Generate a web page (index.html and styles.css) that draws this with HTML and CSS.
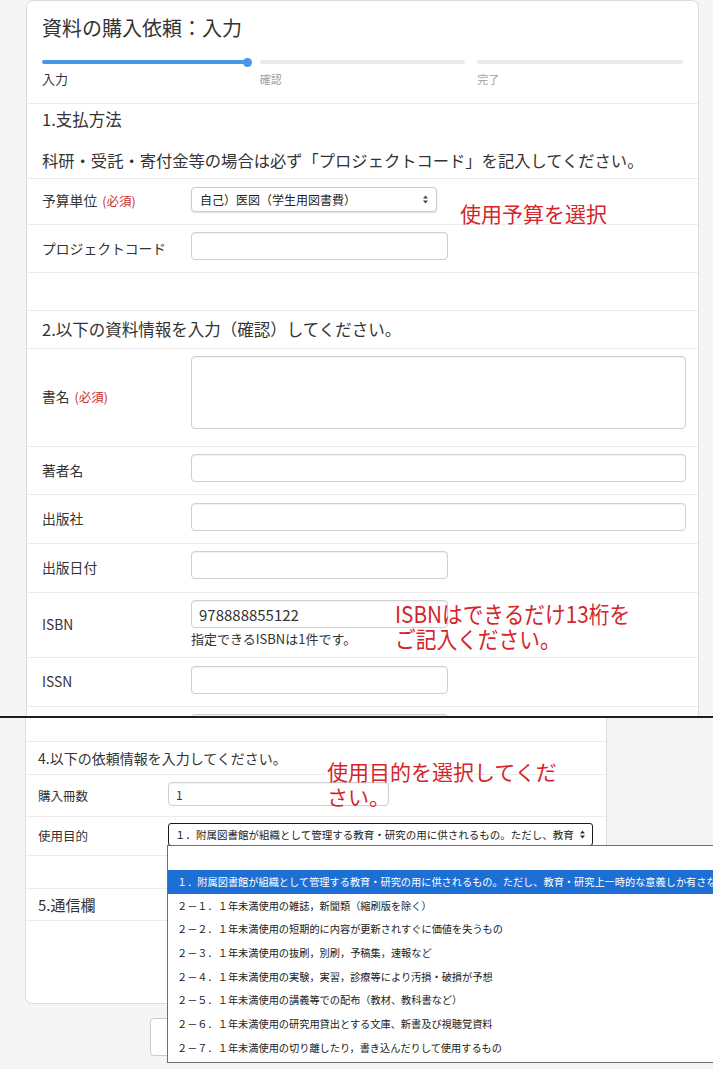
FILE: index.html
```html
<!DOCTYPE html>
<html lang="ja">
<head>
<meta charset="utf-8">
<title>資料の購入依頼：入力</title>
<link rel="stylesheet" href="styles.css">
</head>
<body>
<div class="shot shot-a">
  <div class="card card-a">
    <div class="head">
      <h1 class="title">資料の購入依頼：入力</h1>
      <div class="steps">
        <div class="step done"><div class="bar"><span class="dot"></span></div><span class="step-label">入力</span></div>
        <div class="step"><div class="bar"></div><span class="step-label">確認</span></div>
        <div class="step"><div class="bar"></div><span class="step-label">完了</span></div>
      </div>
    </div>
    <div class="sec sec-1">
      <h2 class="sec-title">1.支払方法</h2>
      <p class="sec-note">科研・受託・寄付金等の場合は必ず「プロジェクトコード」を記入してください。</p>
    </div>
    <div class="row h46">
      <label class="lbl">予算単位<span class="req">(必須)</span></label>
      <div class="ctl ctl-8">
        <div class="sel sel-a"><span>自己）医図（学生用図書費）</span>
          <svg class="arr" width="7" height="11" viewBox="0 0 7 11"><path d="M3.5 1.5 L6 4.5 H1 Z M3.5 9.5 L6 6.5 H1 Z" fill="#444"/></svg>
        </div>
      </div>
    </div>
    <div class="row h48">
      <label class="lbl">プロジェクトコード</label>
      <div class="ctl"><input class="inp w-s" type="text"></div>
    </div>
    <div class="row h38 blank"></div>
    <div class="row-sec h38">2.以下の資料情報を入力（確認）してください。</div>
    <div class="row h98">
      <label class="lbl">書名<span class="req">(必須)</span></label>
      <div class="ctl"><textarea class="inp area w-l"></textarea></div>
    </div>
    <div class="row h48">
      <label class="lbl">著者名</label>
      <div class="ctl"><input class="inp w-l" type="text"></div>
    </div>
    <div class="row h49">
      <label class="lbl">出版社</label>
      <div class="ctl ctl-8"><input class="inp w-l" type="text"></div>
    </div>
    <div class="row h49">
      <label class="lbl">出版日付</label>
      <div class="ctl"><input class="inp w-s" type="text"></div>
    </div>
    <div class="row h65">
      <label class="lbl">ISBN</label>
      <div class="ctl">
        <input class="inp w-s val" type="text" value="978888855122">
        <p class="help">指定できるISBNは1件です。</p>
      </div>
    </div>
    <div class="row h49">
      <label class="lbl">ISSN</label>
      <div class="ctl ctl-8"><input class="inp w-s" type="text"></div>
    </div>
    <div class="row h49">
      <label class="lbl"></label>
      <div class="ctl"><input class="inp w-s" type="text"></div>
    </div>
  </div>
  <div class="note note-budget">使用予算を選択</div>
  <div class="note note-isbn">ISBNはできるだけ13桁を<br>ご記入ください。</div>
</div>
<div class="divider"></div>
<div class="shot shot-b">
  <div class="gutter"></div>
  <div class="col-main">
    <div class="card card-b">
      <div class="brow h24"></div>
      <div class="brow-sec h33 fs14">4.以下の依頼情報を入力してください。</div>
      <div class="brow h42">
        <label class="blbl">購入冊数</label>
        <div class="bctl"><input class="inp inp-b" type="text" value="1"></div>
      </div>
      <div class="brow h39">
        <label class="blbl">使用目的</label>
        <div class="bctl bctl-6">
          <div class="sel sel-b"><span>１．附属図書館が組織として管理する教育・研究の用に供されるもの。ただし、教育</span>
            <svg class="arr" width="7" height="11" viewBox="0 0 7 11"><path d="M3.5 1.5 L6 4.5 H1 Z M3.5 9.5 L6 6.5 H1 Z" fill="#333"/></svg>
          </div>
        </div>
      </div>
      <div class="brow h33"></div>
      <div class="brow-sec h32 fs15">5.通信欄</div>
      <div class="card-body"></div>
    </div>
    <div class="actions"><button class="btn" type="button" aria-label="戻る"></button></div>
  </div>
  <div class="side"></div>

  <div class="note note-purpose">使用目的を選択してくだ<br>さい。</div>

  <ul class="dropdown">
    <li class="opt"></li>
    <li class="opt on">１．附属図書館が組織として管理する教育・研究の用に供されるもの。ただし、教育・研究上一時的な意義しか有さないもの</li>
    <li class="opt">２－１．１年未満使用の雑誌，新聞類（縮刷版を除く）</li>
    <li class="opt">２－２．１年未満使用の短期的に内容が更新されすぐに価値を失うもの</li>
    <li class="opt">２－３．１年未満使用の抜刷，別刷，予稿集，速報など</li>
    <li class="opt">２－４．１年未満使用の実験，実習，診療等により汚損・破損が予想</li>
    <li class="opt">２－５．１年未満使用の講義等での配布（教材、教科書など）</li>
    <li class="opt">２－６．１年未満使用の研究用貸出とする文庫、新書及び視聴覚資料</li>
    <li class="opt">２－７．１年未満使用の切り離したり，書き込んだりして使用するもの</li>
  </ul>
</div>
</body>
</html>
```

FILE: styles.css
```css
* { box-sizing: border-box; margin: 0; padding: 0; }
html, body { width: 713px; height: 1069px; overflow: hidden; }
body {
  font-family: "Noto Sans CJK JP", "Noto Sans", sans-serif;
  color: #333;
  background: #f5f5f5;
}

.shot { position: relative; overflow: hidden; background: #f5f5f5; }
.shot-a { height: 716px; padding-left: 26px; }
.divider { height: 2px; background: #1e1e1e; }
.shot-b {
  height: 351px;
  display: grid;
  grid-template-columns: 25px 582px 1fr;
}

/* ---------- top card ---------- */
.card-a {
  width: 673px;
  background: #fff;
  border: 1px solid #dcdcdc;
  border-bottom: none;
  border-radius: 7px 7px 0 0;
}
.head {
  height: 103px;
  padding: 13px 15px 0;
  border-bottom: 1px solid #ececec;
}
.title { font-size: 20px; line-height: 28px; font-weight: 400; color: #333; }
.steps {
  display: grid;
  grid-template-columns: repeat(3, 1fr);
  column-gap: 12px;
  margin-top: 18px;
}
.bar { position: relative; height: 4px; border-radius: 2px; background: #ebebeb; }
.done .bar { background: #4a97e8; }
.dot {
  position: absolute;
  right: -4px;
  top: -2.5px;
  width: 9px;
  height: 9px;
  border-radius: 50%;
  background: #4a97e8;
}
.step-label { display: block; margin-top: 7px; font-size: 11px; line-height: 16px; color: #a0a0a0; }
.done .step-label { font-size: 13px; color: #333; }

.sec-1 { height: 75px; padding: 3px 15px 0; border-bottom: 1px solid #ececec; }
.sec-title { font-size: 16.5px; line-height: 24px; font-weight: 400; }
.sec-note { margin-top: 17px; font-size: 16.3px; line-height: 24px; }

.row {
  display: grid;
  grid-template-columns: 149px 1fr;
  align-items: center;
  padding: 0 15px;
  border-bottom: 1px solid #ececec;
}
.row-sec {
  display: flex;
  align-items: center;
  padding: 0 15px 2px;
  font-size: 16.5px;
  border-bottom: 1px solid #ececec;
}
.h24 { height: 24px; } .h32 { height: 32px; } .h33 { height: 33px; }
.h38 { height: 38px; } .h39 { height: 39px; } .h42 { height: 42px; }
.h46 { height: 46px; } .h48 { height: 48px; } .h49 { height: 49px; }
.h65 { height: 65px; } .h98 { height: 98px; }

.lbl { font-size: 13.8px; line-height: 20px; color: #333; padding-bottom: 2px; }
.req { margin-left: 5px; font-size: 12.5px; color: #c9302c; }
.ctl { align-self: start; padding-top: 7px; }
.ctl-8 { padding-top: 8px; }

.inp {
  display: block;
  height: 28px;
  padding: 0 7px;
  border: 1px solid #cfcfcf;
  border-radius: 4px;
  background: #fff;
  box-shadow: inset 0 1px 1px rgba(0,0,0,.06);
  font-family: inherit;
  font-size: 14px;
  color: #333;
  outline: none;
}
.w-s { width: 257px; }
.w-l { width: 495px; }
.area { height: 73px; resize: none; }
.val { font-size: 15px; color: #333; }
.help { margin-top: 2px; font-size: 13px; line-height: 18px; color: #333; }

.sel {
  display: flex;
  align-items: center;
  justify-content: space-between;
  background: #fff;
  white-space: nowrap;
  overflow: hidden;
}
.sel span { overflow: hidden; }
.sel-a {
  width: 246px;
  height: 25px;
  padding: 0 7px 0 8px;
  border: 1px solid #cdcdcd;
  border-radius: 4px;
  box-shadow: 0 1px 2px rgba(0,0,0,.13);
  font-size: 12px;
  color: #222;
}
.arr { flex: none; }

.note {
  position: absolute;
  color: #d5252a;
  font-size: 21px;
  white-space: nowrap;
}
.note-budget { left: 460px; top: 199px; line-height: 28px; }
.note-isbn {
  left: 395px;
  top: 601px;
  font-size: 23px;
  line-height: 25px;
  transform: scaleX(0.9);
  transform-origin: left top;
}

/* ---------- bottom part ---------- */
.gutter { background: #f5f5f5; }
.side { background: #f4f4f4; }
.col-main { display: flex; flex-direction: column; }
.card-b {
  background: #fff;
  border: 1px solid #dcdcdc;
  border-top: none;
  border-radius: 0 0 7px 7px;
}
.brow {
  display: grid;
  grid-template-columns: 130px 1fr;
  align-items: center;
  padding: 0 12px;
  border-bottom: 1px solid #ececec;
}
.brow-sec {
  display: flex;
  align-items: center;
  padding: 0 12px;
  border-bottom: 1px solid #ececec;
}
.fs14 { font-size: 14px; }
.fs15 { font-size: 15px; }
.blbl { font-size: 12.5px; line-height: 18px; color: #333; }
.bctl { align-self: start; padding-top: 7px; }
.bctl-6 { padding-top: 6px; }
.inp-b { width: 221px; height: 24px; font-size: 12px; }
.sel-b {
  width: 425px;
  height: 23px;
  padding: 0 6px 0 6px;
  border: 1px solid #1a1a1a;
  border-radius: 3px;
  font-size: 10.5px;
  color: #222;
}
.card-body { height: 82px; }

.actions { padding: 14px 0 0 125px; }
.btn {
  display: block;
  width: 110px;
  height: 38px;
  border: 1px solid #cccccc;
  border-radius: 4px;
  background: #fff;
}

.note-purpose { left: 327px; top: 41px; line-height: 25px; }

.dropdown {
  position: absolute;
  left: 167px;
  top: 127px;
  width: 600px;
  padding-bottom: 2px;
  list-style: none;
  background: #fff;
  border: 1px solid #6f6f6f;
}
.opt {
  height: 23.7px;
  padding-left: 9px;
  font-size: 10.2px;
  line-height: 23.7px;
  color: #222;
  white-space: nowrap;
  overflow: hidden;
}
.opt:first-child { height: 24px; }
.opt.on { background: #1d6fd4; color: #fff; }
```
